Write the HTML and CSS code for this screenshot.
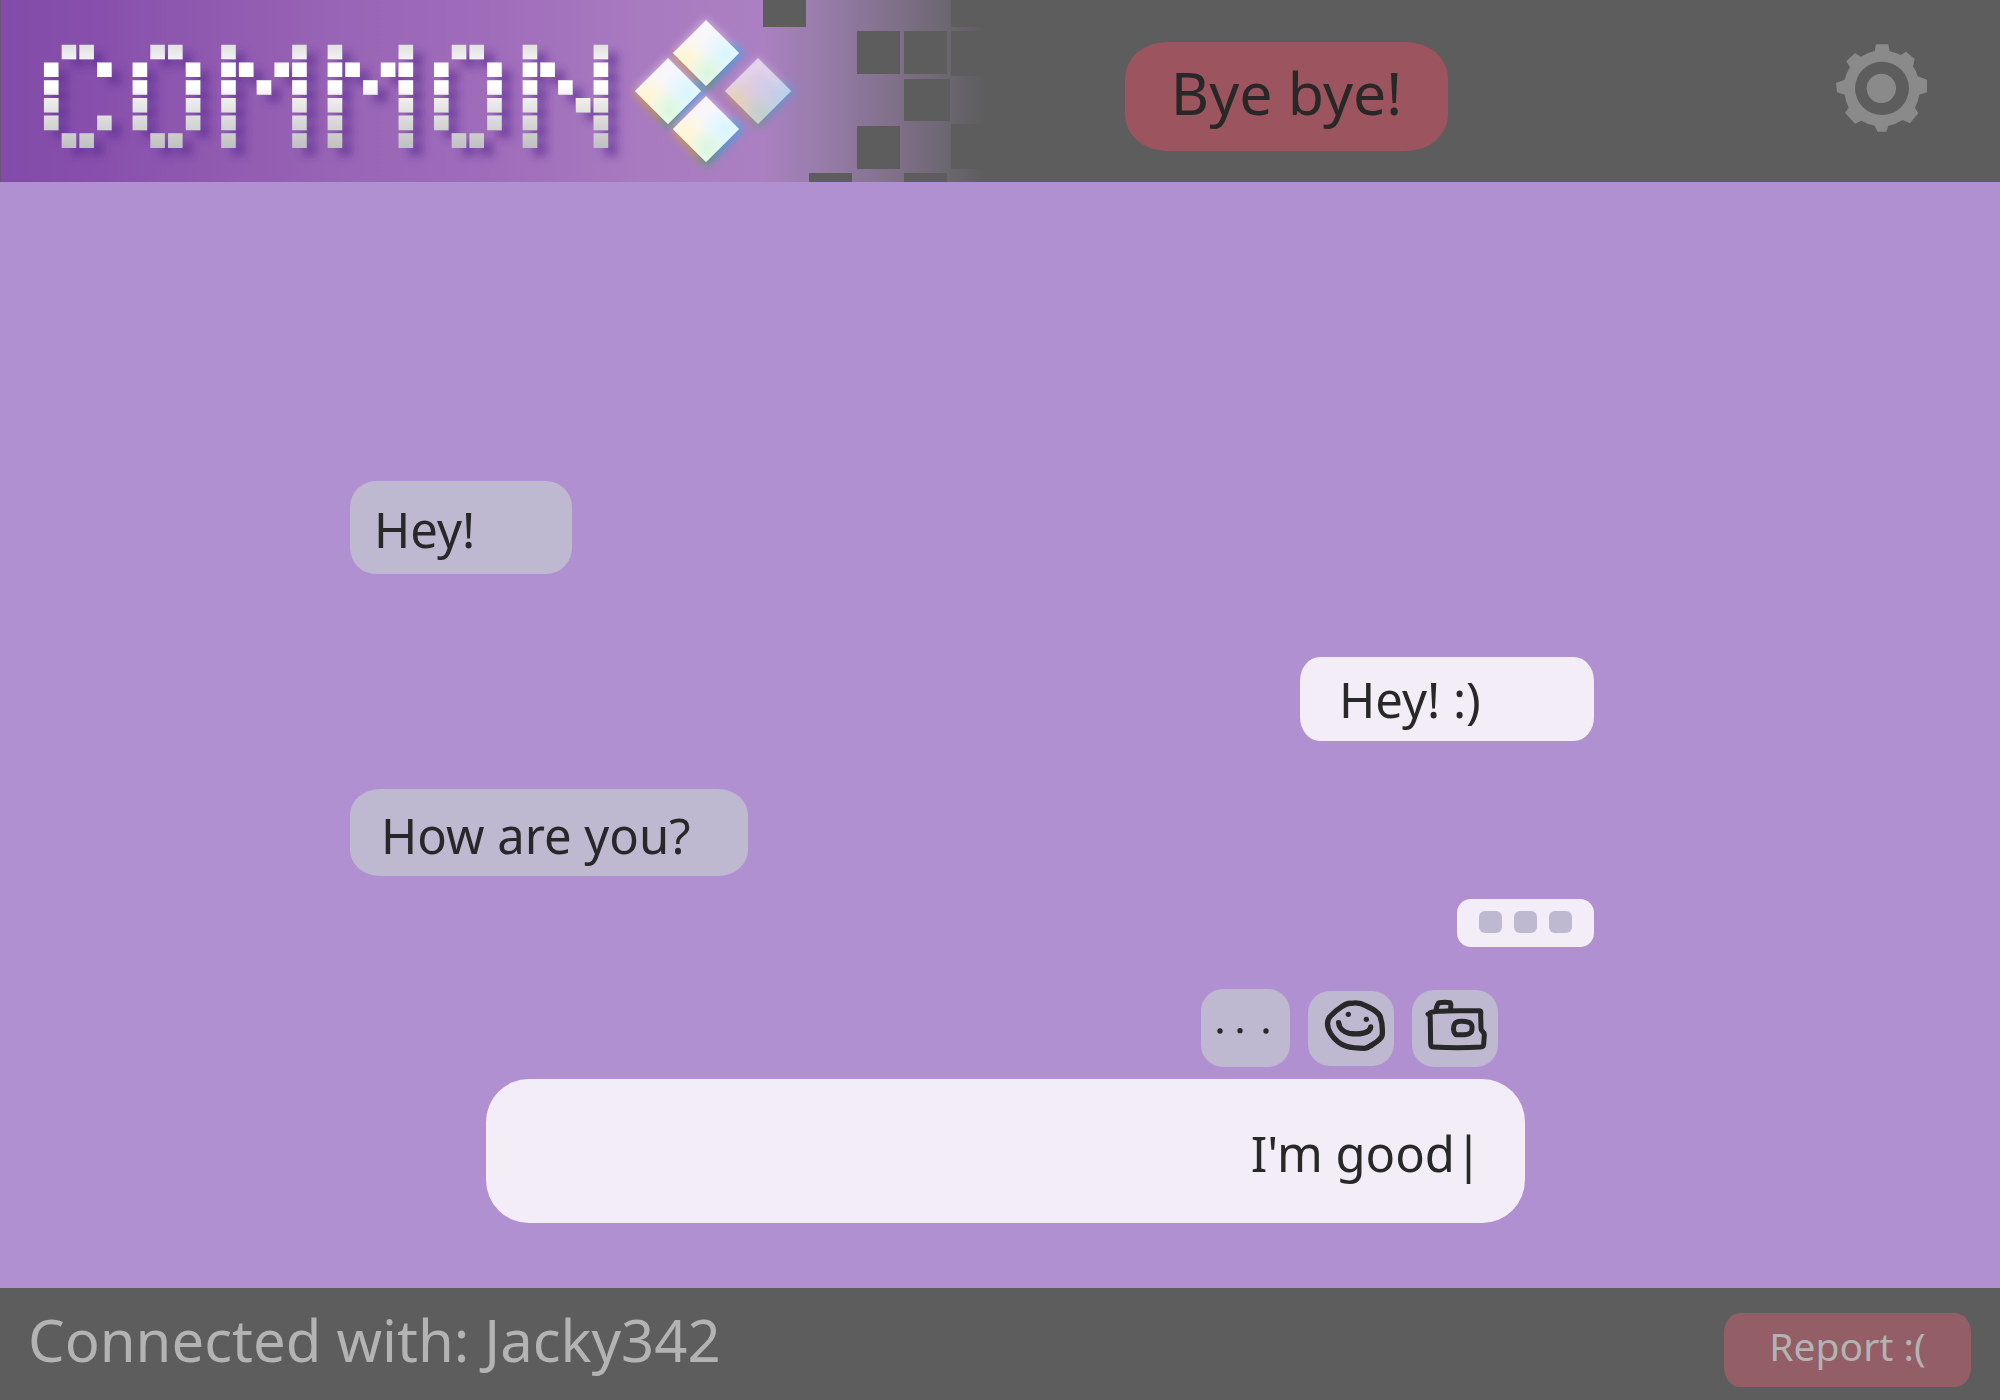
FILE: index.html
```html
<!DOCTYPE html>
<html lang="en">
<head>
<meta charset="utf-8">
<meta name="viewport" content="width=device-width, initial-scale=1">
<title>Common</title>
<link rel="stylesheet" href="styles.css">
</head>
<body>
<header class="topbar">
  <svg class="logo" viewBox="0 0 1000 182" role="img" aria-label="Common">
    <defs>
      <linearGradient id="banner" gradientUnits="userSpaceOnUse" x1="0" y1="0" x2="1000" y2="0">
        <stop offset="0" stop-color="#834ba9"/>
        <stop offset=".1" stop-color="#8850ac"/>
        <stop offset=".33" stop-color="#9864b5"/>
        <stop offset=".5" stop-color="#a06dbb"/>
        <stop offset=".64" stop-color="#a87ac0"/>
        <stop offset=".76" stop-color="#ab80c2"/>
        <stop offset=".81" stop-color="#9b7eae"/>
        <stop offset=".86" stop-color="#8b769a"/>
        <stop offset=".91" stop-color="#7b6d82"/>
        <stop offset=".95" stop-color="#6a6670"/>
        <stop offset=".985" stop-color="#5d5d5d"/>
      </linearGradient>
      <linearGradient id="steel" gradientUnits="userSpaceOnUse" x1="0" y1="0" x2="0" y2="6">
        <stop offset="0" stop-color="#e0e0e0"/>
        <stop offset=".14" stop-color="#f2f2f2"/>
        <stop offset=".18" stop-color="#fff"/>
        <stop offset=".38" stop-color="#fff"/>
        <stop offset=".5" stop-color="#efefef"/>
        <stop offset=".98" stop-color="#bfbfbf"/>
      </linearGradient>
      <filter id="drop" x="-5%" y="-20%" width="110%" height="150%">
        <feDropShadow dx="10" dy="8" stdDeviation="4" flood-color="#5c2d92" flood-opacity=".6"/>
      </filter>
      <filter id="glow" x="-50%" y="-50%" width="200%" height="200%">
        <feGaussianBlur stdDeviation="4"/>
      </filter>
      <linearGradient id="edge" x1="0" y1="0" x2="1" y2="0">
        <stop offset="0" stop-color="#dba83a"/>
        <stop offset=".3" stop-color="#b79a3c"/>
        <stop offset=".52" stop-color="#3f9d74"/>
        <stop offset=".75" stop-color="#3a9fd0"/>
        <stop offset="1" stop-color="#4aa0e0"/>
      </linearGradient>
      <radialGradient id="warm" cx=".2" cy=".6" r=".4">
        <stop offset="0" stop-color="#fff6cf"/><stop offset="1" stop-color="#fff6cf" stop-opacity="0"/>
      </radialGradient>
      <radialGradient id="cool" cx=".8" cy=".52" r=".42">
        <stop offset="0" stop-color="#d8f6ff"/><stop offset="1" stop-color="#d8f6ff" stop-opacity="0"/>
      </radialGradient>
      <radialGradient id="mint" cx=".52" cy=".8" r=".32">
        <stop offset="0" stop-color="#d8f8dc"/><stop offset="1" stop-color="#d8f8dc" stop-opacity="0"/>
      </radialGradient>
      <g id="halo">
        <path d="M-30 0L0-30L30 0" fill="none" stroke="#e9d3f0" stroke-width="6" opacity=".7" filter="url(#glow)"/>
        <path d="M-30 0L0 32L32 0L24-8" fill="none" stroke="url(#edge)" stroke-width="8" filter="url(#glow)"/>
      </g>
      <g id="gem">
        <path d="M-33 0L0-33L33 0L0 33Z" fill="#f9f6fb"/>
        <path d="M-33 0L0-33L33 0L0 33Z" fill="url(#warm)"/>
        <path d="M-33 0L0-33L33 0L0 33Z" fill="url(#cool)"/>
        <path d="M-33 0L0-33L33 0L0 33Z" fill="url(#mint)"/>
      </g>
    </defs>
    <rect width="1000" height="182" fill="url(#banner)"/>
    <rect width="1" height="182" fill="#6c5478"/>
    <g fill="#5d5d5d">
      <rect x="763" width="43" height="27"/>
      <rect x="857" y="31" width="43" height="43"/>
      <rect x="904" y="31" width="43" height="43"/>
      <rect x="904" y="79" width="46" height="42"/>
      <rect x="857" y="126" width="43" height="43"/>
      <rect x="809" y="173" width="43" height="9"/>
      <rect x="904" y="173" width="43" height="9"/>
      <rect x="951" width="49" height="27"/>
      <rect x="951" y="31" width="49" height="45"/>
      <rect x="951" y="124" width="49" height="45"/>
    </g>
    <!-- pixel lettering: every column is a dashed stroke, one dash per pixel -->
    <g filter="url(#drop)">
      <g transform="translate(51.2 44.7) scale(17.73)" fill="none" stroke="url(#steel)" stroke-width=".82" stroke-dasharray=".82 .18">
        <path d="M0 1v3.9M1 0v.9M1 5v.9M2 0v.9M2 5v.9M3 1v.9M3 4v.9"/>
        <path d="M5 1v3.9M6 0v.9M6 5v.9M7 0v.9M7 5v.9M8 1v3.9"/>
        <path d="M10 0v5.9M11 1v.9M12 2v.9M13 1v.9M14 0v5.9"/>
        <path d="M16 0v5.9M17 1v.9M18 2v.9M19 1v.9M20 0v5.9"/>
        <path d="M22 1v3.9M23 0v.9M23 5v.9M24 0v.9M24 5v.9M25 1v3.9"/>
        <path d="M27 0v5.9M28 1v.9M29 2v.9M30 3v.9M31 0v5.9"/>
      </g>
    </g>
    <use href="#halo" x="706" y="53"/>
    <use href="#halo" x="668" y="91"/>
    <use href="#halo" x="706" y="129"/>
    <use href="#halo" x="758" y="91" opacity=".6"/>
    <use href="#gem" x="706" y="53"/>
    <use href="#gem" x="668" y="91"/>
    <use href="#gem" x="706" y="129"/>
    <use href="#gem" x="758" y="91" opacity=".65"/>
  </svg>
  <button class="btn btn-leave" type="button">Bye bye!</button>
  <button class="btn btn-settings" type="button" aria-label="Settings">
    <svg width="91" height="88" viewBox="78 70 273 264" fill="#8a8a8a">
      <path fill-rule="evenodd" d="M198 71H235L239 92Q257 95 272 103L288 93L314 115L309 137Q318 150 323 167L351 177V215L328 222Q324 243 315 261L325 278L300 308L278 298Q258 311 235 315L229 333H203L194 315Q172 311 154 300L135 309L105 276L116 261Q107 243 104 222L81 215L78 187L104 177Q108 158 120 140L109 122L135 97L152 108Q172 96 194 91ZM216 123A81 80 0 1 0 216 283A81 80 0 1 0 216 123Z"/>
      <circle cx="214" cy="203" r="44"/>
    </svg>
  </button>
</header>

<main class="chat">
  <section class="messages" aria-label="Messages">
    <p class="bubble theirs bubble-hey">Hey!</p>
    <p class="bubble mine bubble-reply">Hey! :)</p>
    <p class="bubble theirs bubble-ask">How are you?</p>
    <div class="typing" role="status" aria-label="Typing"><i></i><i></i><i></i></div>
  </section>
  <form class="composer">
    <div class="tools">
      <button class="tool" type="button" aria-label="More">
        <svg width="89" height="78" viewBox="63 327 267 234" fill="#282828"><circle cx="120" cy="453" r="8"/><circle cx="180" cy="452" r="8"/><circle cx="258" cy="453" r="8"/></svg>
      </button>
      <button class="tool" type="button" aria-label="Emoji">
        <svg width="86" height="75" viewBox="381 330 258 225" fill="none" stroke="#282828" stroke-width="16" stroke-linecap="round" stroke-linejoin="round">
          <path d="M511 367C505 366 492 370 484 376C468 386 456 397 445 409C436 424 440 443 449 458C460 475 478 490 496 496C515 502 536 502 551 502C562 501 565 496 573 492C588 482 604 473 604 458C605 440 602 419 597 405C588 389 571 382 556 375C540 366 524 364 511 367Z"/>
          <path d="M473 425C475 444 491 454 505 457C532 461 568 457 569 438"/>
          <g fill="#282828" stroke="none"><circle cx="502" cy="400" r="8"/><circle cx="556" cy="415" r="8"/></g>
        </svg>
      </button>
      <button class="tool" type="button" aria-label="Camera">
        <svg width="86" height="77" viewBox="699 330 258 231" fill="none" stroke="#282828" stroke-width="15" stroke-linecap="round" stroke-linejoin="round">
          <path d="M747 402C755 397 765 395 778 394C820 390 865 393 901 392C908 393 905 398 905 405L906 445C906 458 916 452 916 465L914 492C914 501 911 500 905 501C860 504 810 504 765 501C757 501 755 500 755 492C754 465 755 435 753 398"/>
          <path d="M771 390C773 380 774 373 780 368C790 367 805 367 814 368C817 372 815 380 815 386"/>
          <path d="M828 430C835 422 856 423 870 427C882 432 880 447 877 456C869 466 848 465 830 464C822 455 821 440 828 430Z"/>
        </svg>
      </button>
    </div>
    <input class="field" type="text" aria-label="Message" value="I'm good|">
  </form>
</main>

<footer class="statusbar">
  <p class="peer">Connected with: Jacky342</p>
  <button class="btn btn-report" type="button">Report :(</button>
</footer>
</body>
</html>
```

FILE: styles.css
```css
* {
  box-sizing: border-box;
}

body {
  margin: 0;
  min-height: 100vh;
  display: flex;
  flex-direction: column;
  background: #b090d0;
  color: #282828;
  font-family: "Noto Sans", sans-serif;
}

p {
  margin: 0;
}

svg {
  display: block;
}

button,
input {
  border: 0;
  font-family: inherit;
  color: inherit;
}

.btn {
  padding: 0;
  background: none;
  white-space: nowrap;
}

/* Header */
.topbar {
  display: flex;
  align-items: flex-start;
  padding-right: 73px;
  background: #5d5d5d;
}

.logo {
  flex: none;
  width: 1000px;
  height: 182px;
}

.btn-leave {
  min-width: 323px;
  margin: 42px 0 0 125px;
  padding: 14px 44px 23px;
  border-radius: 42px / 36px;
  background: #9c555f;
  font-size: 59px;
  line-height: 72px;
}

.btn-settings {
  margin: 44px 0 0 auto;
}

/* Conversation */
.chat {
  flex: 1;
  display: flex;
  flex-direction: column;
  justify-content: flex-end;
  padding-bottom: 65px;
}

.messages {
  display: flex;
  flex-direction: column;
  align-items: flex-start;
  padding: 0 20.3% 0 17.5%;
}

.bubble {
  font-size: 49px;
  line-height: 60px;
}

.theirs {
  background: #beb8d1;
}

.mine {
  align-self: flex-end;
  background: #f2edf7;
}

.bubble-hey {
  min-width: 222px;
  padding: 18px 24px 15px;
  border-radius: 26px;
}

.bubble-reply {
  min-width: 294px;
  margin-top: 83px;
  padding: 12px 39px;
  border-radius: 20px / 24px;
}

.bubble-ask {
  min-width: 398px;
  margin-top: 48px;
  padding: 16px 31px 11px;
  border-radius: 30px / 26px;
}

.typing {
  align-self: flex-end;
  display: flex;
  gap: 12px;
  margin-top: 23px;
  padding: 12px 22px 14px;
  border-radius: 14px;
  background: #f2edf7;
}

.typing i {
  width: 23px;
  height: 22px;
  border-radius: 6px;
  background: #beb8d1;
}

/* Composer */
.composer {
  padding: 0 23.75% 0 24.3%;
  margin-top: 42px;
}

.tools {
  display: flex;
  justify-content: flex-end;
  align-items: center;
  gap: 18px;
  padding-right: 27px;
}

.tool {
  padding: 0;
  border-radius: 22px;
  background: #beb8d1;
}

.field {
  display: block;
  width: 100%;
  height: 144px;
  margin-top: 12px;
  padding: 4px 43px 0;
  border-radius: 43px;
  background: #f2edf7;
  font-size: 49px;
  text-align: right;
}

/* Footer */
.statusbar {
  display: flex;
  justify-content: space-between;
  align-items: flex-start;
  padding: 16px 29px 24px 28px;
  background: #5d5d5d;
  color: #b3b3b3;
}

.peer {
  font-size: 58px;
  line-height: 72px;
}

.btn-report {
  min-width: 247px;
  margin: 9px 0 -11px;
  padding: 9px 40px 17px;
  border-radius: 16px / 20px;
  background: #945e67;
  font-size: 39px;
  line-height: 48px;
}
```
